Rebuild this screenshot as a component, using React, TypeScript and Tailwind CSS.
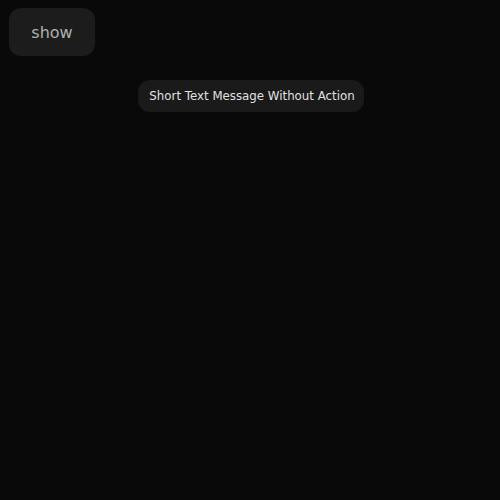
export default function App() {
  return (
    <div className="flex min-h-[500px] w-full flex-col bg-[#090909] pt-2 font-['DejaVu_Sans',sans-serif]">
      <div className="pl-[9px]">
        <button className="h-12 w-[86px] rounded-xl bg-[#1c1c1c] pt-[2px] text-[16px] font-medium text-[#b0b0b0]">
          show
        </button>
      </div>
      <div className="ml-[2px] mt-6 flex h-8 w-[226px] items-center justify-center self-center rounded-xl bg-[#1a1a1a] pl-[2px] pt-[2px] text-[11.8px] text-[#e0e0e0]">
        Short Text Message Without Action
      </div>
    </div>
  );
}
